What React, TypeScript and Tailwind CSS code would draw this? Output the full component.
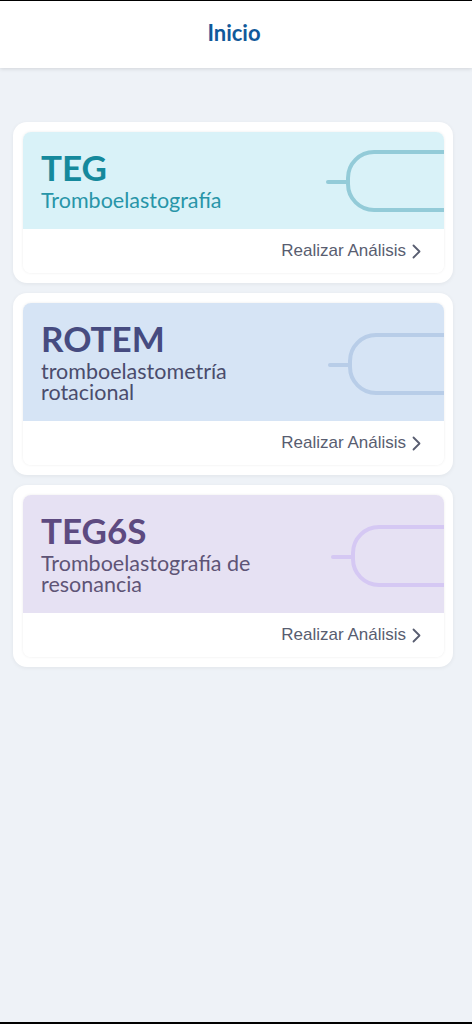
import React from "react";

type Item = {
  title: string;
  subtitle: string;
  panel: string;
  titleColor: string;
  subColor: string;
  stroke: string;
  deco: string;
};

const items: Item[] = [
  {
    title: "TEG",
    subtitle: "Tromboelastografía",
    panel: "bg-[#d9f2f8]",
    titleColor: "text-[#15899c]",
    subColor: "text-[#2895a8]",
    stroke: "#93cbd8",
    deco: "left-[303px] top-[17px]",
  },
  {
    title: "ROTEM",
    subtitle: "tromboelastometría rotacional",
    panel: "bg-[#d6e4f5]",
    titleColor: "text-[#464b80]",
    subColor: "text-[#4a4c6c]",
    stroke: "#b8cde8",
    deco: "left-[305px] top-[29px]",
  },
  {
    title: "TEG6S",
    subtitle: "Tromboelastografía de resonancia",
    panel: "bg-[#e6e1f3]",
    titleColor: "text-[#5d4a80]",
    subColor: "text-[#5e5476]",
    stroke: "#d5c8f3",
    deco: "left-[308px] top-[29px]",
  },
];

function Deco({ stroke }: { stroke: string }) {
  return (
    <svg width="124" height="64" viewBox="0 0 124 64" fill="none">
      <path d="M2 33 H22" stroke={stroke} strokeWidth="4" strokeLinecap="round" />
      <path
        d="M124 3 H48 A26 26 0 0 0 22 29 V35 A26 26 0 0 0 48 61 H124"
        stroke={stroke}
        strokeWidth="4"
        strokeLinecap="round"
      />
    </svg>
  );
}

function Card({ item }: { item: Item }) {
  return (
    <div className="bg-white rounded-[14px] pt-[10px] pb-[10px] pl-[10px] pr-[9px] shadow-[0_1px_4px_rgba(0,0,0,0.06)]">
      <div className="rounded-[8px] overflow-hidden shadow-[0_0_3px_rgba(0,0,0,0.08)] bg-white">
        <div className={`relative ${item.panel} pt-[17px] pb-[18px] pl-[18px]`}>
          <div className={`absolute ${item.deco}`}>
            <Deco stroke={item.stroke} />
          </div>
          <div className="relative w-[250px]" style={{ fontFamily: "Lato, 'Noto Sans', sans-serif" }}>
            <div className={`text-[35px] leading-[36px] font-bold ${item.titleColor}`}>{item.title}</div>
            <div className={`mt-[5px] text-[21.5px] leading-[21px] ${item.subColor}`}>{item.subtitle}</div>
          </div>
        </div>
        <div className="h-[44px] flex items-center justify-end pr-[23px] bg-white">
          <span
            className="text-[17px] text-[#585d70]"
            style={{ fontFamily: "'Liberation Sans', Arial, sans-serif" }}
          >
            Realizar Análisis
          </span>
          <svg className="ml-[6px]" width="9" height="15" viewBox="0 0 9 15" fill="none">
            <path d="M1.5 1.5 L7.5 7.5 L1.5 13.5" stroke="#585d70" strokeWidth="1.8" strokeLinecap="round" strokeLinejoin="round" />
          </svg>
        </div>
      </div>
    </div>
  );
}

export default function App() {
  return (
    <div className="h-[1024px] bg-[#eef2f7] border-t border-b-2 border-black overflow-hidden">
      <div className="h-[67px] bg-white shadow-[0_1px_4px_rgba(0,0,0,0.12)] flex items-center justify-center pr-[4px] pb-[4px] relative">
        <span
          className="text-[22px] font-bold text-[#11599a]"
          style={{ fontFamily: "Lato, 'Noto Sans', sans-serif" }}
        >
          Inicio
        </span>
      </div>
      <div className="pt-[54px] pl-[13px] pr-[19px] flex flex-col gap-[10px]">
        {items.map((it) => (
          <Card key={it.title} item={it} />
        ))}
      </div>
    </div>
  );
}
